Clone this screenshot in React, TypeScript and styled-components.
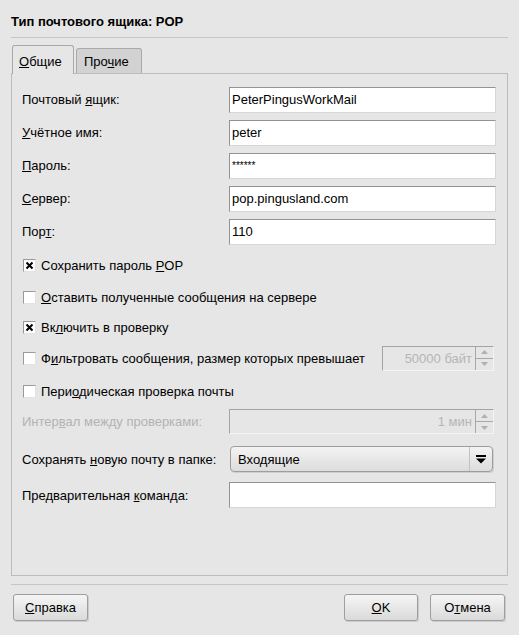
import React from 'react';
import styled, { createGlobalStyle } from 'styled-components';

// Base page styles
const GlobalStyle = createGlobalStyle`
  html, body {
    margin: 0;
    padding: 0;
    background: #e6e6e6;
  }
`;

const Page = styled.div`
  width: 519px;
  height: 635px;
  box-sizing: border-box;
  padding: 0 11px;
  display: flex;
  flex-direction: column;
  background: #e6e6e6;
  font-family: 'Liberation Sans', Arial, sans-serif;
  font-size: 13px;
  color: #000;
`;

const Title = styled.div`
  font-weight: bold;
  padding-top: 14px;
  height: 15px;
  line-height: 15px;
  padding-bottom: 8px;
  border-bottom: 1px solid #c6c6c6;
`;

const TabBar = styled.div`
  display: flex;
  align-items: flex-end;
  gap: 2px;
  margin-top: 7px;
  padding-left: 1px;
  position: relative;
  z-index: 1;
`;

const Tab = styled.div<{ $active?: boolean; $w: number }>`
  width: ${p => p.$w}px;
  height: ${p => (p.$active ? 29 : 25)}px;
  box-sizing: border-box;
  display: flex;
  align-items: center;
  padding-left: ${p => (p.$active ? 6 : 7)}px;
  padding-top: ${p => (p.$active ? 2 : 0)}px;
  border: 1px solid #a9a9a9;
  border-bottom: none;
  border-radius: 3px 3px 0 0;
  background: ${p => (p.$active ? '#e6e6e6' : '#d2d2d2')};
  margin-bottom: ${p => (p.$active ? -1 : 0)}px;
`;

const Panel = styled.div`
  height: 503px;
  box-sizing: border-box;
  border: 1px solid #bcbcbc;
  padding: 9px 11px 0 10px;
`;

const Form = styled.div`
  display: grid;
  grid-template-columns: 207px 267px;
  grid-template-rows: repeat(5, 33px) 34px 30px 30px 32px 34px 27px 48px 24px;
  align-items: center;
`;

const Label = styled.div<{ $disabled?: boolean }>`
  grid-column: 1;
  color: ${p => (p.$disabled ? '#b3b3b3' : '#000')};
  white-space: nowrap;
`;

const Field = styled.div<{ $small?: boolean }>`
  grid-column: 2;
  height: 26px;
  box-sizing: border-box;
  display: flex;
  align-items: center;
  padding: 0 2px;
  background: #fff;
  border: 1px solid #d6d6d6;
  border-top-color: #939393;
  border-left-color: #939393;
  font-size: ${p => (p.$small ? '10px' : '13px')};
  white-space: nowrap;
`;

const CheckRow = styled.label`
  grid-column: 1 / -1;
  display: flex;
  align-items: center;
  justify-content: space-between;
`;

const CheckText = styled.span`
  display: flex;
  align-items: center;
  gap: 5px;
  margin-left: 1px;
`;

const Box = styled.span`
  width: 13px;
  height: 13px;
  box-sizing: border-box;
  display: inline-flex;
  align-items: center;
  justify-content: center;
  background: #fff;
  border: 1px solid #e2e2e2;
  border-top-color: #9a9a9a;
  border-left-color: #9a9a9a;
`;

const Spin = styled.div<{ $w: number }>`
  grid-column: 2;
  justify-self: end;
  width: ${p => p.$w}px;
  height: 25px;
  margin-right: 2px;
  box-sizing: border-box;
  display: flex;
  background: #e6e6e6;
  border: 1px solid #f4f4f4;
  border-top-color: #a4a4a4;
  border-left-color: #a4a4a4;
  color: #b5b5b5;
`;

const SpinValue = styled.div`
  flex: 1;
  display: flex;
  align-items: center;
  justify-content: flex-end;
  padding-right: 3px;
`;

const SpinButtons = styled.div`
  width: 17px;
  display: flex;
  flex-direction: column;
  border-left: 1px solid #a8a8a8;
`;

const SpinHalf = styled.div<{ $top?: boolean }>`
  flex: 1;
  display: flex;
  align-items: center;
  justify-content: center;
  border-bottom: ${p => (p.$top ? '1px solid #a8a8a8' : 'none')};
`;

const Combo = styled.div`
  grid-column: 2;
  width: 263px;
  height: 26px;
  margin-left: 1px;
  box-sizing: border-box;
  display: flex;
  border: 1px solid #9d9d9d;
  border-radius: 4px;
  background: linear-gradient(#f3f3f3, #dcdcdc);
  box-shadow: 1px 1px 0 #cfcfcf;
`;

const ComboText = styled.div`
  flex: 1;
  display: flex;
  align-items: center;
  padding-left: 7px;
`;

const ComboArrow = styled.div`
  width: 22px;
  display: flex;
  align-items: center;
  justify-content: center;
  border-left: 1px solid #c2c2c2;
`;

const Separator = styled.div`
  margin-top: 8px;
  border-top: 1px solid #c6c6c6;
`;

const ButtonRow = styled.div`
  display: flex;
  gap: 12px;
  margin-top: 9px;
  padding: 0 3px 0 2px;
`;

const Button = styled.button<{ $w: number; $push?: boolean }>`
  width: ${p => p.$w}px;
  height: 27px;
  margin-right: ${p => (p.$push ? 'auto' : '0')};
  box-sizing: border-box;
  border: 1px solid #9e9e9e;
  border-radius: 3px;
  background: linear-gradient(#f5f5f5, #dadada);
  box-shadow: 1px 1px 0 #cbcbcb;
  font: inherit;
  color: #000;
  padding: 0;
`;

const Check: React.FC<{ on?: boolean }> = ({ on }) => (
  <Box>
    {on && (
      <svg width="9" height="9" viewBox="0 0 9 9">
        <path d="M1.5 1.5 L7.5 7.5 M7.5 1.5 L1.5 7.5" stroke="#000" strokeWidth="2" />
      </svg>
    )}
  </Box>
);

const SpinControl: React.FC<{ w: number; value: string }> = ({ w, value }) => (
  <Spin $w={w}>
    <SpinValue>{value}</SpinValue>
    <SpinButtons>
      <SpinHalf $top>
        <svg width="7" height="4" viewBox="0 0 7 4"><path d="M0 4 L3.5 0 L7 4 Z" fill="#b0b0b0" /></svg>
      </SpinHalf>
      <SpinHalf>
        <svg width="7" height="4" viewBox="0 0 7 4"><path d="M0 0 L3.5 4 L7 0 Z" fill="#b0b0b0" /></svg>
      </SpinHalf>
    </SpinButtons>
  </Spin>
);

const App: React.FC = () => {
  return (
    <Page>
      <GlobalStyle />
      <Title>Тип почтового ящика: POP</Title>

      <TabBar>
        <Tab $active $w={62}><span><u>О</u>бщие</span></Tab>
        <Tab $w={66}><span>Про<u>ч</u>ие</span></Tab>
      </TabBar>

      <Panel>
        <Form>
          <Label>Почтовый <u>я</u>щик:</Label>
          <Field>PeterPingusWorkMail</Field>

          <Label><u>У</u>чётное имя:</Label>
          <Field>peter</Field>

          <Label><u>П</u>ароль:</Label>
          <Field $small>******</Field>

          <Label><u>С</u>ервер:</Label>
          <Field>pop.pingusland.com</Field>

          <Label>Пор<u>т</u>:</Label>
          <Field>110</Field>

          <CheckRow>
            <CheckText><Check on /><span>Сохранить пароль <u>P</u>OP</span></CheckText>
          </CheckRow>

          <CheckRow>
            <CheckText><Check /><span><u>О</u>ставить полученные сообщения на сервере</span></CheckText>
          </CheckRow>

          <CheckRow>
            <CheckText><Check on /><span>Вк<u>л</u>ючить в проверку</span></CheckText>
          </CheckRow>

          <CheckRow>
            <CheckText><Check /><span>Ф<u>и</u>льтровать сообщения, размер которых превышает</span></CheckText>
            <SpinControl w={112} value="50000 байт" />
          </CheckRow>

          <CheckRow>
            <CheckText><Check /><span>Пери<u>о</u>дическая проверка почты</span></CheckText>
          </CheckRow>

          <Label $disabled>Интер<u>в</u>ал между проверками:</Label>
          <SpinControl w={265} value="1 мин" />

          <Label>Сохранять <u>н</u>овую почту в папке:</Label>
          <Combo>
            <ComboText>Входящие</ComboText>
            <ComboArrow>
              <svg width="10" height="9" viewBox="0 0 10 9">
                <rect x="0" y="0" width="10" height="2" fill="#000" />
                <path d="M0 3.5 L10 3.5 L5 8.5 Z" fill="#000" />
              </svg>
            </ComboArrow>
          </Combo>

          <Label>Предварительная <u>к</u>оманда:</Label>
          <Field />
        </Form>
      </Panel>

      <Separator />

      <ButtonRow>
        <Button $w={75} $push><u>С</u>правка</Button>
        <Button $w={74}><u>O</u>K</Button>
        <Button $w={75}>О<u>т</u>мена</Button>
      </ButtonRow>
    </Page>
  );
};

export default App;
